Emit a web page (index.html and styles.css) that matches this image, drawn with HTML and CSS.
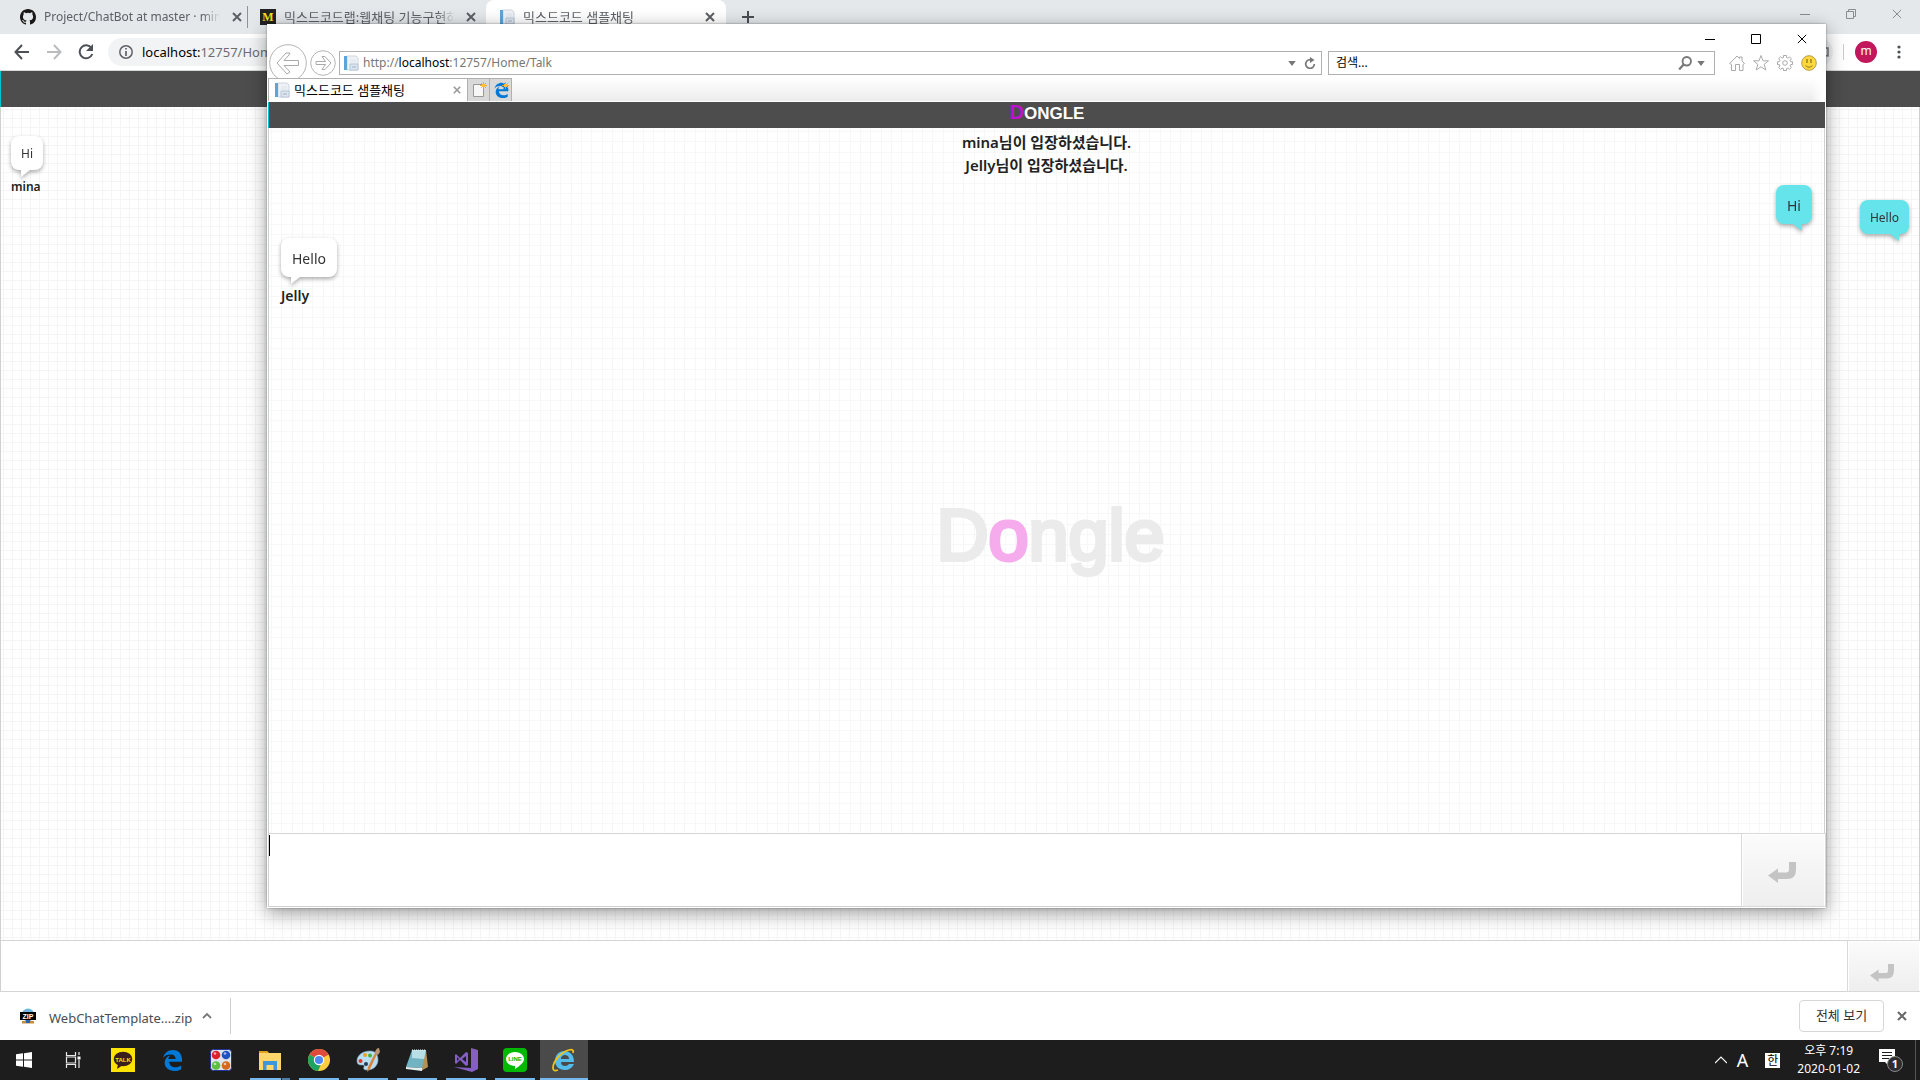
FILE: index.html
```html
<!DOCTYPE html>
<html lang="ko">
<head>
<meta charset="utf-8">
<title>믹스드코드 샘플채팅</title>
<link rel="stylesheet" href="styles.css">
</head>
<body>
<svg class="defs" width="0" height="0" aria-hidden="true">
  <defs>
    <symbol id="page" viewBox="0 0 16 16"><path d="M4 1h9l2 2v12H4z" fill="#eef2f7" stroke="#cfd6df" stroke-width="1"/><path d="M7 5h6M7 7h6" stroke="#dfe5ec"/><path d="M1 1h3v14H1z" fill="#5fa4d6"/><path d="M7 9h8v6H7z" fill="#dde5ef" stroke="#b9c5d6"/><path d="M9 12h4" stroke="#9fb0c6"/></symbol>
    <symbol id="enter" viewBox="0 0 28 21"><path d="M0 13.500 10 6.500V10.500H18Q21 10.500 21 7.500V0H28V8Q28 17 19 17H10V21Z" fill="#c4c4c4"/></symbol>
    <symbol id="close" viewBox="0 0 10 10"><path d="M1 1l8 8M9 1l-8 8" stroke="currentColor" stroke-width="2"/></symbol>
    <symbol id="thin-close" viewBox="0 0 12 12"><path d="M1 1l10 10M11 1 1 11" stroke="currentColor" stroke-width="1.200"/></symbol>
    <symbol id="edge" viewBox="0 0 24 24"><path d="M2 11C3 4 8 1 13 1c7 0 10 5 10 11v2H9c0 4 3 6 7 6 2 0 4-1 6-2v4c-2 1-4 2-7 2-7 0-11-4-11-9 0-4 2-7 6-8-1 1-2 3-2 4h8c0-3-2-5-5-5-4 0-7 1-9 4z" fill="#0078d7"/></symbol>
    <symbol id="spark" viewBox="0 0 10 10"><path d="M5 0v10M0 5h10M1.500 1.500l7 7M8.500 1.500l-7 7" stroke="#f0a020" stroke-width="1.300"/><circle cx="5" cy="5" r="2.500" fill="#ffbe3c"/></symbol>
  </defs>
</svg>

<main class="browser">
  <div class="tabstrip">
    <div class="tab tab-first">
      <svg class="i16" viewBox="0 0 16 16"><path fill="#191717" d="M8 0C3.580 0 0 3.580 0 8c0 3.540 2.290 6.530 5.470 7.590.400.070.550-.170.550-.380v-1.490c-2.010.370-2.530-.490-2.690-.940-.090-.230-.480-.940-.820-1.130-.280-.150-.680-.520-.010-.530.630-.010 1.080.580 1.230.820.720 1.210 1.870.870 2.330.660.070-.520.280-.870.510-1.070-1.780-.200-3.640-.890-3.640-3.950 0-.870.310-1.590.820-2.150-.080-.200-.360-1.020.080-2.120 0 0 .670-.210 2.200.820a7.500 7.500 0 0 1 4 0c1.530-1.040 2.200-.820 2.200-.820.440 1.100.160 1.920.080 2.120.510.560.820 1.270.820 2.150 0 3.070-1.870 3.750-3.650 3.950.290.250.540.730.540 1.480v2.200c0 .210.150.460.550.380A8 8 0 0 0 16 8c0-4.420-3.580-8-8-8z"/></svg>
      <span class="tab-title">Project/ChatBot at master · mina</span>
      <svg class="i10"><use href="#close"/></svg>
    </div>
    <div class="tab tab-second">
      <span class="m-icon">M</span>
      <span class="tab-title hangul">믹스드코드랩:웹채팅 기능구현하</span>
      <svg class="i10"><use href="#close"/></svg>
    </div>
    <div class="tab tab-active">
      <svg class="i16"><use href="#page"/></svg>
      <span class="tab-title hangul">믹스드코드 샘플채팅</span>
      <svg class="i10"><use href="#close"/></svg>
    </div>
    <button class="plain new-tab" aria-label="새 탭"><svg class="i12" viewBox="0 0 12 12"><path d="M6 0v12M0 6h12" stroke="#4a4d51" stroke-width="2"/></svg></button>
    <div class="winctl">
      <button class="plain" aria-label="최소화"><svg class="i10" viewBox="0 0 10 10"><path d="M0 5.500h10" stroke="#8a8d90"/></svg></button>
      <button class="plain" aria-label="이전 크기로"><svg class="i10" viewBox="0 0 10 10"><path d="M.5 2.500h7v7h-7zM2.500 2.500v-2h7v7h-2" fill="none" stroke="#8a8d90"/></svg></button>
      <button class="plain" aria-label="닫기"><svg class="i10"><use href="#thin-close"/></svg></button>
    </div>
  </div>
  <div class="toolbar">
    <button class="plain nav" aria-label="뒤로"><svg class="i16" viewBox="0 0 16 16"><path d="M8 1 1.500 8 8 15M1.500 8H15" fill="none" stroke="#4d5156" stroke-width="2"/></svg></button>
    <button class="plain nav" aria-label="앞으로"><svg class="i16" viewBox="0 0 16 16"><path d="M8 1l6.500 7L8 15M14.500 8H1" fill="none" stroke="#babcbe" stroke-width="2"/></svg></button>
    <button class="plain nav" aria-label="새로고침"><svg class="i16" viewBox="0 0 16 16"><path d="M13.500 4A6.500 6.500 0 1 0 14.300 10" fill="none" stroke="#4d5156" stroke-width="2"/><path d="M15 0v7H8z" fill="#4d5156"/></svg></button>
    <div class="omnibox">
      <svg class="i14" viewBox="0 0 14 14"><circle cx="7" cy="7" r="6.200" fill="none" stroke="#5f6368" stroke-width="1.500"/><path d="M7 6v5M7 3v1.600" stroke="#5f6368" stroke-width="1.700"/></svg>
      <span><b>localhost:</b>12757/Home/Talk</span>
      <svg class="i10 bookmark" viewBox="0 0 10 10"><path d="M1 1h8v8L1 8z" fill="none" stroke="#777" stroke-width="1.500"/></svg>
    </div>
    <span class="tool-divider"></span>
    <span class="avatar">m</span>
    <button class="plain menu" aria-label="메뉴"><svg width="4" height="14" viewBox="0 0 4 14"><circle cx="2" cy="2" r="1.600" fill="#4d5156"/><circle cx="2" cy="7" r="1.600" fill="#4d5156"/><circle cx="2" cy="12" r="1.600" fill="#4d5156"/></svg></button>
  </div>
  <section class="chat">
    <header class="chat-head"></header>
    <div class="log">
      <div class="msg"><p class="bubble">Hi</p><strong class="who">mina</strong></div>
      <div class="msg mine"><p class="bubble">Hello</p></div>
    </div>
    <form class="composer">
      <textarea aria-label="메시지"></textarea>
      <button type="button" aria-label="보내기"><svg class="enter"><use href="#enter"/></svg></button>
    </form>
  </section>
  <div class="downloads">
    <svg class="i16" viewBox="0 0 16 16"><circle cx="8" cy="7" r="6.500" fill="#72b5e0"/><path d="M2 13h12v2.500H2z" fill="#c98a3a"/><path d="M6 12h4v3H6z" fill="#2b63a8"/><path d="M0 4h16v8H0z" fill="#000"/><text x="8" y="11" text-anchor="middle" class="zip-text">ZIP</text></svg>
    <span class="file">WebChatTemplate....zip</span>
    <svg class="i10" viewBox="0 0 10 10"><path d="M1 7l4-4 4 4" fill="none" stroke="#777" stroke-width="1.800"/></svg>
    <span class="dl-divider"></span>
    <button class="show-all">전체 보기</button>
    <button class="plain" aria-label="닫기"><svg class="i10 dl-close"><use href="#close"/></svg></button>
  </div>
</main>

<section class="window">
  <div class="ie-title">
    <button class="plain" aria-label="최소화"><svg class="i10" viewBox="0 0 10 10"><path d="M0 5.500h10" stroke="#000"/></svg></button>
    <button class="plain" aria-label="최대화"><svg class="i10" viewBox="0 0 10 10"><path d="M.5.5h9v9h-9z" fill="none" stroke="#000"/></svg></button>
    <button class="plain" aria-label="닫기"><svg class="i10"><use href="#thin-close"/></svg></button>
  </div>
  <div class="ie-bar">
    <button class="plain" aria-label="뒤로"><svg class="ie-back" viewBox="0 0 38 38"><circle cx="19" cy="19" r="18.300" fill="#fff" stroke="#b4b4b4"/><path d="M8 19 17 9h4l-1 2-5 5.500h14.500v5H15L21 28l-3 2z" fill="none" stroke="#a9a9a9" stroke-linejoin="round"/></svg></button>
    <button class="plain" aria-label="앞으로"><svg class="ie-fwd" viewBox="0 0 26 26"><circle cx="13" cy="13" r="12.300" fill="#fff" stroke="#b4b4b4"/><path d="M21 13l-6 6.500h-3l3.500-5H6v-3h9.500L12 6.500h3z" fill="none" stroke="#a9a9a9" stroke-linejoin="round"/></svg></button>
    <div class="field address">
      <svg class="i16"><use href="#page"/></svg>
      <span class="url">http://<b>localhost</b>:12757/Home/Talk</span>
      <svg class="tri" viewBox="0 0 6 4"><path d="M0 0h6L3 4z" fill="#777"/></svg>
      <svg class="i12" viewBox="0 0 12 12"><path d="M8 3.200A4.300 4.300 0 1 0 10.300 7" fill="none" stroke="#777" stroke-width="1.700"/><path d="M6 0v6l4.500-3z" fill="#777"/></svg>
    </div>
    <div class="field search">
      <input type="text" aria-label="검색" placeholder="검색...">
      <svg class="i14" viewBox="0 0 12 12"><circle cx="7.500" cy="4.500" r="3.600" fill="none" stroke="#777" stroke-width="1.600"/><path d="M5 7 1 11.500" stroke="#777" stroke-width="2"/></svg>
      <svg class="tri" viewBox="0 0 6 4"><path d="M0 0h6L3 4z" fill="#777"/></svg>
    </div>
    <div class="ie-tools">
      <svg class="i16" viewBox="0 0 16 16"><path d="M.7 8.500 8 1l2.500 2.500V2H13v4l2.500 2.500-1.500 1V15.500h-3.500V9.500h-4v6H2.500v-6z" fill="none" stroke="#aaa" stroke-linejoin="round"/></svg>
      <svg class="i16" viewBox="0 0 16 16"><path d="M8 .5l2 5.300h5.500L11.200 9.300 12.800 15 8 11.800 3.200 15l1.600-5.700L.5 5.800H6z" fill="none" stroke="#aaa" stroke-linejoin="round"/></svg>
      <svg class="i16" viewBox="0 0 16 16"><path d="M6.500.5h3v2l1.500.7 1.600-1.300 1.800 1.900L13.100 5.300l.6 1.400h1.800v2.800h-1.800l-.7 1.500 1.300 1.500-1.900 1.900-1.500-1.300-1.400.6v1.800h-3v-1.800L5 13.100l-1.500 1.300-1.900-1.900L2.900 11l-.6-1.500H.5V6.700h1.800L3 5.300 1.700 3.700l1.900-1.900L5 3.100l1.500-.6z" fill="none" stroke="#aaa"/><circle cx="8" cy="8" r="2.300" fill="none" stroke="#aaa"/></svg>
      <svg class="i16" viewBox="0 0 16 16"><circle cx="8" cy="8" r="7.300" fill="#ffd93b" stroke="#b59a4a"/><path d="M6 4v4M10 4v4" stroke="#8d7424" stroke-width="1.300"/><path d="M4.500 10.500Q8 14 11.500 10.500" fill="none" stroke="#8d7424"/></svg>
    </div>
  </div>
  <div class="ie-tabs">
    <div class="ie-tab">
      <svg class="i16"><use href="#page"/></svg>
      <span class="hangul">믹스드코드 샘플채팅</span>
      <svg class="i8"><use href="#close"/></svg>
    </div>
    <button class="ie-mini" aria-label="새 탭"><svg class="i16" viewBox="0 0 16 16"><path d="M2.500 2.500h10v12h-10z" fill="#f7f7f7" stroke="#999"/><use href="#spark" x="9" y="0" width="7" height="7"/></svg></button>
    <button class="ie-mini" aria-label="Edge에서 열기"><svg class="i16" viewBox="0 0 16 16"><use href="#edge" width="16" height="16"/><use href="#spark" x="9" y="0" width="7" height="7"/></svg></button>
    <div class="ie-rest"></div>
  </div>
  <section class="chat chat-large">
    <header class="chat-head"><h1 class="logo"><span>D</span>ONGLE</h1></header>
    <div class="log">
      <div class="watermark">D<span>o</span>ngle</div>
      <p class="notice">mina님이 입장하셨습니다.</p>
      <p class="notice">Jelly님이 입장하셨습니다.</p>
      <div class="msg mine"><p class="bubble">Hi</p></div>
      <div class="msg"><p class="bubble">Hello</p><strong class="who">Jelly</strong></div>
    </div>
    <form class="composer">
      <span class="caret"></span>
      <textarea aria-label="메시지"></textarea>
      <button type="button" aria-label="보내기"><svg class="enter"><use href="#enter"/></svg></button>
    </form>
  </section>
</section>

<nav class="taskbar">
  <button class="task start" aria-label="시작"><svg class="i16" viewBox="0 0 16 16"><path d="M0 2.300 7 1.300v6.200H0zM8 1.200 16 0v7.500H8zM0 8.500h7v6.200l-7-1zM8 8.500h8V16l-8-1.200z" fill="#fff"/></svg></button>
  <button class="task view" aria-label="작업 보기"><svg class="i16" viewBox="0 0 16 16"><path d="M1.500 0v3.500h9V0M1.500 16v-3.500h9V16M1.500 5h9v6h-9zM14 0v3M14 8v8" fill="none" stroke="#e8e8e8" stroke-width="1.200"/><path d="M12.500 4.500h3v3h-3z" fill="#fff"/></svg></button>
  <button class="task" aria-label="카카오톡"><svg class="i24" viewBox="0 0 24 24"><path d="M0 0h24v24H0z" fill="#ffe300"/><ellipse cx="12" cy="11" rx="9.300" ry="7.300" fill="#3a1d1d"/><path d="M7 16l-1 5 6-4z" fill="#3a1d1d"/><text x="12" y="13.500" text-anchor="middle" class="talk-text">TALK</text></svg></button>
  <button class="task" aria-label="Edge"><svg class="i22"><use href="#edge"/></svg></button>
  <button class="task" aria-label="구슬"><svg class="i24" viewBox="0 0 24 24"><rect x="1.500" y="1.500" width="21" height="21" rx="3" fill="#dfe3ee" stroke="#24349b"/><circle cx="7" cy="7" r="4.300" fill="#df1f2c"/><circle cx="17" cy="7" r="4.300" fill="#1f52c0"/><circle cx="7" cy="17.500" r="4.300" fill="#56c23e"/><circle cx="17" cy="17.500" r="4.300" fill="#d4691d"/><g fill="#fff" opacity=".6"><circle cx="6" cy="5.500" r="1.300"/><circle cx="16" cy="5.500" r="1.300"/><circle cx="6" cy="16" r="1.300"/><circle cx="16" cy="16" r="1.300"/></g></svg></button>
  <button class="task run stacked" aria-label="파일 탐색기"><svg class="i22" viewBox="0 0 22 22"><path d="M0 2h8l2 2h12v17H0z" fill="#ffd66b"/><path d="M0 2h8l1.500 2H0z" fill="#e0a21d"/><path d="M4 12h14v9h-3.500v-5h-7v5H4z" fill="#3e97dc"/></svg></button>
  <button class="task run" aria-label="Chrome"><svg class="i22" viewBox="0 0 22 22"><circle cx="11" cy="11" r="11" fill="#ffcd40"/><path d="M11 11 1.500 5.500A11 11 0 0 1 20.500 5.500z" fill="#de4b3e"/><path d="M1.500 5.500 11 11l1.500 5.500L10 22A11 11 0 0 1 1.500 5.500z" fill="#1da462"/><path d="M11 6h9.800a11 11 0 0 0-.8-1.500H11z" fill="#de4b3e"/><circle cx="11" cy="11" r="5.200" fill="#fff"/><circle cx="11" cy="11" r="4.100" fill="#4c8bf5"/></svg></button>
  <button class="task run" aria-label="그림판"><svg class="i24" viewBox="0 0 24 24"><path d="M1 13C1 7 7 3 14 3c6 0 8 4 8 9s-4 10-11 10c-3 0-4-1-3-3s-1-2-3-2-4-1-4-4z" fill="#b9ddf1" stroke="#80aac4" stroke-width=".6"/><circle cx="9" cy="7" r="2" fill="#e8a030"/><circle cx="14" cy="7.500" r="2" fill="#4aae45"/><circle cx="4.500" cy="13" r="2" fill="#d53b32"/><circle cx="10" cy="16" r="2" fill="#263c59"/><path d="M22 4 14 21l-3 3 1-5 8-16z" fill="#d8843b"/><path d="M19 5c0-3 2-5 4-5l1 4-2 3z" fill="#b89676"/></svg></button>
  <button class="task run" aria-label="메모장"><svg class="i24" viewBox="0 0 24 24"><path d="M21 2l2 17-7 4-1-3z" fill="#b59254"/><path d="M7 2h14l-4 18-16-1z" fill="#70b4c3"/><path d="M7 2h14l-2 9-12-1z" fill="#b9dfe6"/><path d="M1 19l16 1v3L1 21z" fill="#e4eef0"/><path d="M7 2h14" stroke="#edf5f7" stroke-dasharray="1 1"/></svg></button>
  <button class="task run" aria-label="Visual Studio"><svg class="i24" viewBox="0 0 24 24"><path d="M17 0l7 2v19l-6 3L0 19l17 1z" fill="#865fc5"/><path d="M2 6l4 4 6-6 2 1v12l-2 1-6-6-4 4-1-1V7zm1 3v4l2-2zm9-1-4 3 4 3z" fill="#865fc5" fill-rule="evenodd"/></svg></button>
  <button class="task run" aria-label="LINE"><svg class="i24" viewBox="0 0 24 24"><rect width="24" height="24" rx="4" fill="#00b900"/><path d="M12 4c5 0 9 3 9 7 0 3-3 6-9 10v-3c-5 0-9-3-9-7s4-7 9-7z" fill="#fff"/><text x="12" y="13" text-anchor="middle" class="line-text">LINE</text></svg></button>
  <button class="task run current" aria-label="Internet Explorer"><svg class="i24" viewBox="0 0 24 24"><path d="M3 13C3 7 7 3 12.500 3S22 7 22 14H9c0 3 2 4 4 4s3-1 4-2h5c-2 4-5 6-9 6-6 0-10-4-10-9zm6-2h8c0-3-2-4-4-4s-4 1-4 4z" fill="#55bdec" fill-rule="evenodd"/><path d="M21 5c1-3-1-4-4-3C9 4 1 13 1 20c0 3 2 3 5 2" fill="none" stroke="#f2c218" stroke-width="1.800"/></svg></button>
  <div class="tray">
    <svg class="i12" viewBox="0 0 12 12"><path d="M0 9l6-6 6 6" fill="none" stroke="#fff" stroke-width="1.200"/></svg>
    <span class="ime">A</span>
    <span class="han">한</span>
    <time class="clock">오후 7:19<br>2020-01-02</time>
    <svg class="i24" viewBox="0 0 24 24"><path d="M0 1h16v13H9v3l-3-3H0z" fill="#fff"/><path d="M3 4.500h10M3 7.500h10M3 10.500h7" stroke="#1d1d1d"/><circle cx="16" cy="16" r="7.500" fill="#2d2d2d" stroke="#888"/><text x="16" y="20" text-anchor="middle" class="count-text">1</text></svg>
    <span class="peek"></span>
  </div>
</nav>
</body>
</html>
```

FILE: styles.css
```css
* { box-sizing: border-box; }
html, body { height: 100%; }
body {
  margin: 0;
  display: flex;
  flex-direction: column;
  position: relative;
  overflow: hidden;
  font: 12px/16px "Noto Sans", "Noto Sans CJK KR", sans-serif;
  color: #333;
  background: #fff;
}
p, h1 { margin: 0; }
b { font-weight: 400; color: #000; }
svg { display: block; flex: none; }
button, input, textarea { font: inherit; color: inherit; }
.defs { position: absolute; }
.plain { padding: 0; border: 0; background: none; display: flex; align-items: center; justify-content: center; flex: none; }
.hangul { font-size: 13px; }
.i8 { width: 8px; height: 8px; }
.i10 { width: 10px; height: 10px; }
.i12 { width: 12px; height: 12px; }
.i14 { width: 14px; height: 14px; }
.i16 { width: 16px; height: 16px; }
.i22 { width: 22px; height: 22px; }
.i24 { width: 24px; height: 24px; }

/* Browser behind */
.browser { flex: 1; min-height: 0; display: flex; flex-direction: column; }
.tabstrip { height: 34px; flex: none; display: flex; background: #e4e8eb; color: #5c6065; }
.tab { width: 239px; display: flex; align-items: center; gap: 8px; padding: 0 10px 0 12px; flex: none; }
.tab-first { width: 247px; padding: 0 10px 0 20px; }
.tab-first .tab-title { flex: 1 0 auto; width: 180px; }
.tab-second { border-left: 1px solid #8f9397; border-image: linear-gradient(#0000 20%, #8f9397 20%, #8f9397 80%, #0000 80%) 1; }
.tab-active { width: 240px; background: #fff; border-radius: 8px 8px 0 0; padding: 0 11px 0 13px; }
.tab-title { flex: 1; min-width: 0; overflow: hidden; white-space: nowrap; -webkit-mask-image: linear-gradient(90deg, #000 88%, #0000 98%); mask-image: linear-gradient(90deg, #000 88%, #0000 98%); }
.m-icon { width: 16px; height: 16px; background: #222; color: #f9dc1c; font: bold 12px/16px "Liberation Serif", serif; text-align: center; }
.new-tab { width: 44px; }
.winctl { margin-left: auto; display: flex; height: 28px; color: #8a8d90; }
.winctl .plain { width: 46px; }
.toolbar { height: 37px; flex: none; display: flex; align-items: center; padding: 0 6px; border-bottom: 1px solid #d5d8d7; }
.nav { width: 32px; height: 32px; }
.omnibox { flex: 1; height: 28px; margin: 0 10px 0 6px; padding: 0 4px 0 11px; border-radius: 14px; background: #f1f3f4; display: flex; align-items: center; gap: 9px; font-size: 13px; color: #6a6e72; }
.bookmark { margin-left: auto; }
.tool-divider { width: 1px; height: 16px; background: #ccc; }
.avatar { width: 22px; height: 22px; margin: 0 11px; border-radius: 50%; background: #c2185b; color: #fff; text-align: center; line-height: 20px; }
.menu { width: 22px; margin-right: 4px; }

/* Chat page */
.chat { flex: 1; min-height: 0; display: flex; flex-direction: column; }
.chat-head { height: 36px; flex: none; background: #4d4d4d; border-left: 1px solid #00c4d0; display: flex; justify-content: center; align-items: flex-start; }
.log {
  flex: 1;
  min-height: 0;
  position: relative;
  padding: 29px 10px;
  border-right: 1px solid #d0d0d0;
  border-left: 1px solid #d0d0d0;
  background: linear-gradient(#f4f6f6 1px, #0000 1px) 3px 2px / 9px 9px, linear-gradient(90deg, #f4f6f6 1px, #0000 1px) 2px 2px / 9px 9px, #fff;
}
.msg { display: flex; flex-direction: column; align-items: flex-start; }
.msg.mine { align-items: flex-end; }
.bubble { position: relative; padding: 10px 10px 8px; border-radius: 8px; background: #fff; filter: drop-shadow(0 2px 2px #0005); }
.bubble::after { content: ""; position: absolute; left: 10px; top: 100%; width: 9px; height: 7px; background: inherit; clip-path: polygon(0 0, 100% 0, 0 100%); }
.mine .bubble { background: #65e4eb; }
.mine .bubble::after { left: auto; right: 10px; clip-path: polygon(0 0, 100% 0, 100% 100%); }
.who { margin-top: 9px; font-weight: 600; color: #222; }
.log > .mine { margin-top: 5px; }
.composer { height: 51px; flex: none; display: flex; position: relative; border-top: 1px solid #d5d5d5; border-left: 1px solid #d0d0d0; background: #fff; }
.composer textarea { flex: 1; border: 0; outline: 0; resize: none; padding: 4px; background: #fff; }
.composer button { width: 72px; padding: 13px 4px 0 0; border: 1px solid #fff; border-bottom: 0; outline: 1px solid #d9d9d9; background: linear-gradient(#fbfbfb, #eee); display: flex; justify-content: center; align-items: center; }
.enter { width: 24px; height: 18px; }

/* Downloads */
.downloads { height: 49px; flex: none; display: flex; align-items: center; padding: 0 13px 0 20px; border-top: 1px solid #d5d5d5; background: #fff; }
.file { margin: 3px 10px 0 13px; font-size: 13px; color: #4a4d51; }
.dl-divider { width: 1px; height: 36px; margin-left: 18px; background: #ccc; }
.show-all { margin-left: auto; margin-right: 13px; width: 85px; height: 32px; padding: 0 0 2px; border: 1px solid #d5d7da; border-radius: 4px; background: #fff; font-size: 13px; }
.dl-close { color: #666; }
.zip-text { font: bold 7px "Liberation Sans", sans-serif; fill: #fff; }

/* Floating window */
.window { position: absolute; left: 267px; right: 94px; top: 24px; bottom: 172px; display: flex; flex-direction: column; padding: 0 1px 1px; background: #fff; box-shadow: 0 0 2px #0006, 0 5px 18px #0006; }
.ie-title { height: 27px; flex: none; display: flex; justify-content: flex-end; align-items: center; color: #000; padding-top: 3px; }
.ie-title .plain { width: 46px; height: 24px; }
.ie-bar { height: 24px; flex: none; display: flex; align-items: center; padding: 0 8px 0 1px; }
.ie-back { width: 38px; height: 38px; }
.ie-fwd { width: 26px; height: 26px; margin: 0 3px; }
.field { height: 24px; border: 1px solid #b0b0b0; background: #fff; display: flex; align-items: center; }
.address { flex: 1; padding: 0 5px 0 3px; gap: 4px; color: #777; }
.url { flex: 1; }
.address .i12 { margin-left: 4px; }
.tri { width: 8px; height: 5px; }
.search { width: 387px; margin-left: 6px; padding: 0 9px 0 7px; gap: 5px; }
.search input { flex: 1; min-width: 0; border: 0; outline: 0; padding: 0; background: none; }
.search input::placeholder { color: #000; opacity: 1; }
.ie-tools { display: flex; gap: 8px; margin-left: 14px; }
.ie-tabs { position: relative; height: 27px; flex: none; display: flex; padding: 3px 0 1px; }
.ie-tab { width: 199px; display: flex; align-items: center; gap: 4px; padding: 0 6px 0 5px; border: 1px solid #b0b0b0; border-width: 1px 0 0 1px; background: #fff; color: #000; }
.ie-tab span { flex: 1; }
.ie-tab .i8 { color: #999; }
.ie-mini { width: 22px; padding: 0; border: 1px solid #b0b0b0; border-width: 1px 0 0 1px; background: #d9d9d9; display: flex; align-items: center; justify-content: center; }
.ie-rest { flex: 1; border-left: 1px solid #b0b0b0; background: linear-gradient(90deg, #fff0 calc(100% - 14px), #fff calc(100% - 2px)), linear-gradient(#fff, #ececec); }

.chat-large { font-size: 14px; line-height: 19px; border-bottom: 1px solid #d0d0d0; }
.chat-large .chat-head { height: 26px; }
.logo { font: bold 17px/20px "Liberation Sans", sans-serif; color: #fff; }
.logo span { font-size: 20px; color: #c010d0; }
.chat-large .log {
  padding: 3px 12px;
  background:
    linear-gradient(#f6f8f8 1px, #0000 1px 10px, #f6f8f8 10px 11px, #0000 11px 21px, #f6f8f8 21px 22px, #0000 22px) 0 3px / 31px 31px,
    linear-gradient(90deg, #f6f8f8 1px, #0000 1px 10px, #f6f8f8 10px 11px, #0000 11px 21px, #f6f8f8 21px 22px, #0000 22px) 2px 0 / 31px 31px, #fff;
}
.watermark { position: absolute; left: 8px; right: 0; top: 52%; line-height: 80px; font-family: "Liberation Sans", sans-serif; font-size: 72px; text-align: center; color: #ebebeb; -webkit-text-stroke: 4px #ebebeb; stroke-linejoin: round; }
.watermark span { color: #f6acec; -webkit-text-stroke-color: #f6acec; }
.notice { position: relative; text-align: center; font-size: 15px; line-height: 23px; font-weight: 600; color: #222; }
.chat-large .bubble { padding: 11px 11px 9px; }
.chat-large .log > .mine { margin-top: 8px; }
.chat-large .mine + .msg { margin-top: 14px; }
.chat-large .composer { height: 73px; }
.chat-large .composer button { width: 83px; padding: 4px 4px 0 0; }
.chat-large .enter { width: 28px; height: 21px; }
.caret { position: absolute; left: 0; top: 1px; width: 1px; height: 21px; background: #000; }

/* Taskbar */
.taskbar { height: 40px; flex: none; display: flex; gap: 1px; background: #1d1d1d; color: #fff; }
.task { width: 48px; padding: 0; border: 0; background: none; display: flex; align-items: center; justify-content: center; position: relative; }
.view { width: 47px; margin-right: 2px; }
.run::after { content: ""; position: absolute; left: 4px; right: 4px; bottom: 0; height: 2px; background: #76b9ed; }
.stacked::after { background: linear-gradient(90deg, #76b9ed 31px, #1d1d1d 31px 32px, #4e7da3 32px); }
.current { background: #4a4a4a; }
.current::after { left: 0; right: 0; }
.talk-text { font: bold 6px "Liberation Sans", sans-serif; fill: #ffe300; }
.line-text { font: bold 6px "Liberation Sans", sans-serif; fill: #00b900; }
.count-text { font: bold 11px "Noto Sans", sans-serif; fill: #fff; }
.tray { margin-left: auto; display: flex; align-items: center; }
.tray .i12 { margin-right: 10px; }
.ime { margin-right: 17px; font-size: 18px; line-height: 24px; }
.han { width: 15px; height: 15px; background: #fff; color: #000; line-height: 15px; text-align: center; }
.clock { margin: 0 19px 0 17px; line-height: 18px; text-align: center; }
.peek { width: 1px; height: 40px; margin: 0 4px 0 12px; background: #555; }
```
